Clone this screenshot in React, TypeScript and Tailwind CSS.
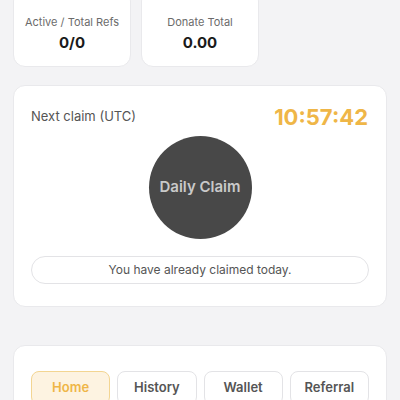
export default function App() {
  const tabs = ['Home', 'History', 'Wallet', 'Referral'];

  return (
    <div
      className="h-[400px] overflow-hidden bg-[#f3f3f5] px-[13px]"
      style={{ fontFamily: 'Inter, "Noto Sans", sans-serif' }}
    >
      {/* stats row, scrolled partly out of view */}
      <div className="-mt-[11px] flex gap-[10px]">
        {[
          { label: 'Active / Total Refs', value: '0/0' },
          { label: 'Donate Total', value: '0.00' },
        ].map((s) => (
          <div
            key={s.label}
            className="flex h-[78px] w-[118px] flex-col items-center rounded-[12px] border border-[#e9e9ec] bg-white pt-[24px]"
          >
            <div className="text-[11px] leading-[16px] text-[#6b6b6b]">{s.label}</div>
            <div className="mt-[3px] text-[15px] font-bold leading-[20px] text-[#1a1a1a]">{s.value}</div>
          </div>
        ))}
      </div>

      {/* daily claim card */}
      <div className="mt-[18px] rounded-[12px] border border-[#e9e9ec] bg-white px-[17px] pt-[17px] pb-[22px]">
        <div className="flex h-[28px] items-center justify-between">
          <span className="text-[13px] text-[#555]">Next claim (UTC)</span>
          <span className="pr-[1px] text-[22px] font-bold text-[#efb647]">10:57:42</span>
        </div>
        <div className="mt-[5px] flex justify-center">
          <button className="flex h-[103px] w-[103px] items-center justify-center rounded-full bg-[#484848] text-[15px] font-semibold text-[#c9c9c9]">
            Daily Claim
          </button>
        </div>
        <div className="mt-[17px] flex h-[28px] items-center justify-center rounded-full border border-[#e3e3e6] text-[12px] text-[#555]">
          You have already claimed today.
        </div>
      </div>

      {/* navigation card */}
      <div className="mt-[38px] rounded-[12px] border border-[#e9e9ec] bg-white px-[17px] pt-[25px] pb-[20px]">
        <div className="flex gap-[7px]">
          {tabs.map((t) => (
            <button
              key={t}
              className={
                t === 'Home'
                  ? 'h-[34px] flex-1 rounded-[8px] border border-[#f3d592] bg-[#fdf3e1] text-[13px] font-semibold text-[#efb647]'
                  : 'h-[34px] flex-1 rounded-[8px] border border-[#e3e3e6] bg-white text-[13px] font-semibold text-[#555]'
              }
            >
              {t}
            </button>
          ))}
        </div>
      </div>
    </div>
  );
}
